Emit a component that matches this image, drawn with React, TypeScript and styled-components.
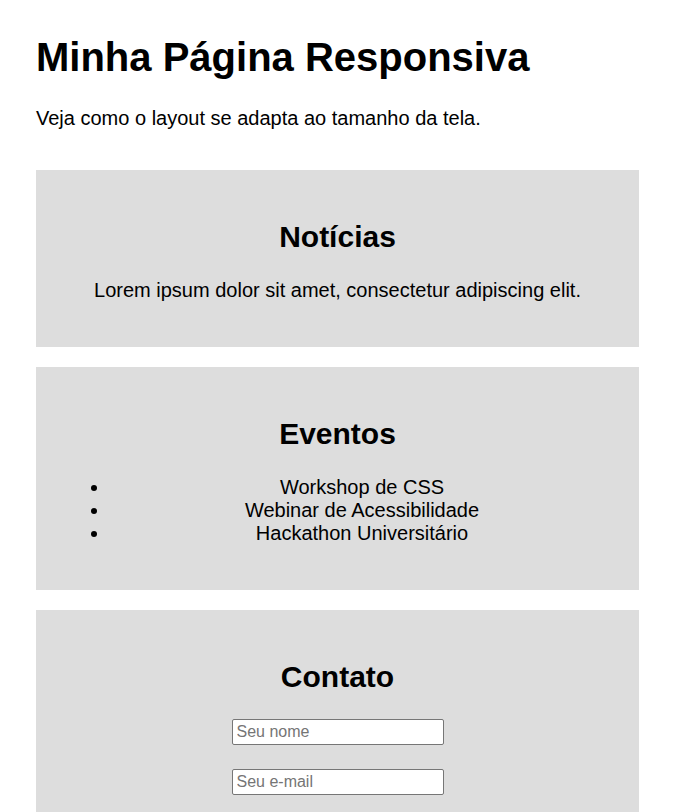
import React from "react";
import styled, { createGlobalStyle } from "styled-components";

const GlobalStyle = createGlobalStyle`
  body {
    margin: 8px;
    font-family: "Liberation Sans", Arial, sans-serif;
    font-size: 20px;
    color: #000;
    background: #fff;
  }
`;

const Page = styled.div`
  width: 603px;
  margin-left: 28px;
`;

const Title = styled.h1`
  font-size: 40px;
  font-weight: bold;
  margin: 26.8px 0;
`;

const Intro = styled.p`
  font-size: 20px;
  margin: 20px 0;
`;

const Sections = styled.main`
  display: flex;
  flex-direction: column;
  gap: 20px;
  padding-top: 20px;
`;

const Card = styled.section`
  background: #dddddd;
  padding: 25px;
  text-align: center;
`;

const CardTitle = styled.h2`
  font-size: 30px;
  font-weight: bold;
  margin: 25px 0;
`;

const CardText = styled.p`
  margin: 20px 0;
`;

const List = styled.ul`
  margin: 20px 0;
  padding-left: 49px;
  list-style: disc outside;
`;

const Form = styled.form`
  display: flex;
  flex-direction: column;
  align-items: center;
  gap: 24px;
  margin: 0 0 20px;
`;

const Field = styled.input`
  box-sizing: border-box;
  width: 212px;
  height: 26px;
  padding: 3px 4px;
  font-family: "Liberation Sans", Arial, sans-serif;
  font-size: 16px;
  border: 1px solid #767676;
  border-radius: 2px;
  background: #fff;
  &::placeholder {
    color: #757575;
  }
`;

export default function App() {
  return (
    <>
      <GlobalStyle />
      <Page>
        <Title>Minha Página Responsiva</Title>
        <Intro>Veja como o layout se adapta ao tamanho da tela.</Intro>
        <Sections>
          <Card>
            <CardTitle>Notícias</CardTitle>
            <CardText>Lorem ipsum dolor sit amet, consectetur adipiscing elit.</CardText>
          </Card>
          <Card>
            <CardTitle>Eventos</CardTitle>
            <List>
              <li>Workshop de CSS</li>
              <li>Webinar de Acessibilidade</li>
              <li>Hackathon Universitário</li>
            </List>
          </Card>
          <Card>
            <CardTitle>Contato</CardTitle>
            <Form onSubmit={(e) => e.preventDefault()}>
              <Field type="text" placeholder="Seu nome" />
              <Field type="email" placeholder="Seu e-mail" />
              <Field type="text" placeholder="Sua mensagem" />
            </Form>
          </Card>
        </Sections>
      </Page>
    </>
  );
}
